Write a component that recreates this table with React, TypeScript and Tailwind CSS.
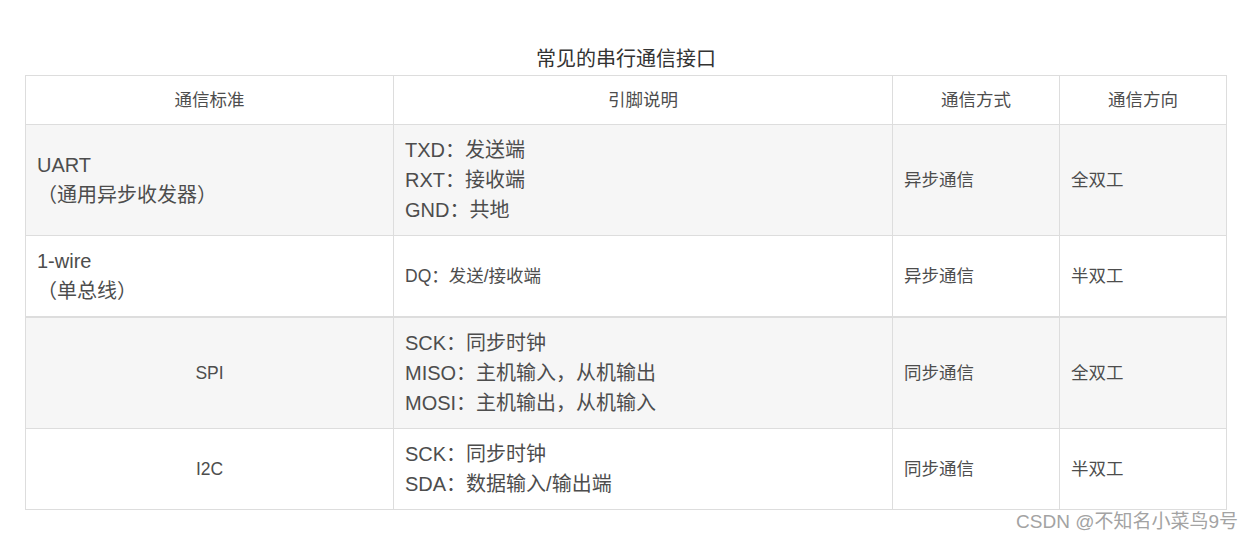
import React from "react";

type Row = {
  name: React.ReactNode;
  nameCenter?: boolean;
  pins: string[];
  pinsSmall?: boolean;
  mode: string;
  dir: string;
  shaded?: boolean;
  thickBottom?: boolean;
};

const rows: Row[] = [
  {
    name: (
      <>
        <div>UART</div>
        <div>（通用异步收发器）</div>
      </>
    ),
    pins: ["TXD：发送端", "RXT：接收端", "GND：共地"],
    mode: "异步通信",
    dir: "全双工",
    shaded: true,
  },
  {
    name: (
      <>
        <div>1-wire</div>
        <div>（单总线）</div>
      </>
    ),
    pins: ["DQ：发送/接收端"],
    pinsSmall: true,
    mode: "异步通信",
    dir: "半双工",
    thickBottom: true,
  },
  {
    name: "SPI",
    nameCenter: true,
    pins: ["SCK：同步时钟", "MISO：主机输入，从机输出", "MOSI：主机输出，从机输入"],
    mode: "同步通信",
    dir: "全双工",
    shaded: true,
  },
  {
    name: "I2C",
    nameCenter: true,
    pins: ["SCK：同步时钟", "SDA：数据输入/输出端"],
    mode: "同步通信",
    dir: "半双工",
  },
];

const cell = "border border-[#dddddd] px-[11px] align-middle";

export default function App() {
  return (
    <div
      className="relative w-[1254px] h-[540px] bg-white text-[#4d4d4d] overflow-hidden"
      style={{ fontFamily: '"Liberation Sans", Arial, "Noto Sans CJK SC", sans-serif' }}
    >
      <div className="pl-[25px] pt-[44px]">
        <div className="w-[1202px] text-center text-[20px] leading-[30px] text-[#333333]">
          常见的串行通信接口
        </div>
        <table className="w-[1201px] table-fixed border-collapse mt-px">
          <colgroup>
            <col className="w-[368px]" />
            <col className="w-[499px]" />
            <col className="w-[167px]" />
            <col className="w-[167px]" />
          </colgroup>
          <thead>
            <tr className="h-[49px] text-[17.5px] text-center">
              <th className={`${cell} font-normal`}>通信标准</th>
              <th className={`${cell} font-normal`}>引脚说明</th>
              <th className={`${cell} font-normal`}>通信方式</th>
              <th className={`${cell} font-normal`}>通信方向</th>
            </tr>
          </thead>
          <tbody>
            {rows.map((r, i) => (
              <tr
                key={i}
                className={`${r.shaded ? "bg-[#f6f6f6]" : "bg-white"} ${
                  r.thickBottom ? "border-b-2 border-[#dddddd]" : ""
                }`}
              >
                <td
                  className={`${cell} py-[10px] ${
                    r.nameCenter ? "text-center text-[17.5px]" : "text-[20px] leading-[30px]"
                  }`}
                >
                  {r.name}
                </td>
                <td
                  className={`${cell} py-[10px] ${
                    r.pinsSmall ? "text-[17.5px] leading-[30px]" : "text-[20px] leading-[30px]"
                  }`}
                >
                  {r.pins.map((p) => (
                    <div key={p}>{p}</div>
                  ))}
                </td>
                <td className={`${cell} text-[17.5px]`}>{r.mode}</td>
                <td className={`${cell} text-[17.5px]`}>{r.dir}</td>
              </tr>
            ))}
          </tbody>
        </table>
      </div>
      <div className="absolute right-[16px] top-[509px] text-[19px] leading-[26px] text-[#a3a3a3]">
        CSDN @不知名小菜鸟9号
      </div>
    </div>
  );
}
